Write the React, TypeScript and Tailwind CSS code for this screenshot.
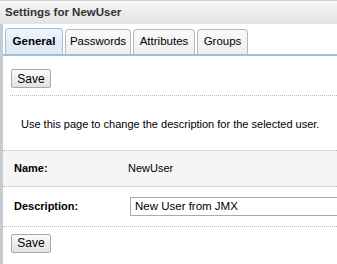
const tabs = [
  { label: "General", w: "w-[58px]" },
  { label: "Passwords", w: "w-[66px]" },
  { label: "Attributes", w: "w-[62px]" },
  { label: "Groups", w: "w-[51px]" },
];

const SaveButton = () => (
  <button className="h-[19px] w-[40px] border border-[#a9a9a9] rounded-[2px] bg-gradient-to-b from-[#fbfbfb] to-[#e2e2e2] text-[12px] leading-none text-black">
    Save
  </button>
);

export default function App() {
  return (
    <div className="w-[337px] h-[264px] overflow-hidden bg-white text-[11px] text-black font-['Liberation_Sans',sans-serif]">
      <div className="h-[24px] border-t border-[#d0d0d0] bg-gradient-to-b from-[#f6f6f6] to-[#e2e2e2] flex items-center pl-[5px]">
        <span className="font-bold text-[11.5px] text-[#333]">Settings for NewUser</span>
      </div>
      <div className="border-l-[3px] border-[#c5cbd1] h-[240px]">
        <div className="flex items-end gap-[2px] pl-[2px] pt-[4px] border-b-2 border-[#9ec0dd]">
          {tabs.map((t, i) => (
            <div
              key={t.label}
              className={
                i === 0
                  ? `h-[26px] ${t.w} justify-center flex items-center font-bold text-[11.5px] border border-b-0 border-[#9ec0dd] rounded-t-[4px] bg-gradient-to-b from-[#eef4fa] to-[#dbe8f4]`
                  : `h-[25px] ${t.w} justify-center flex items-center text-[11.5px] border border-b-0 border-[#b9b9b9] rounded-t-[4px] bg-gradient-to-b from-[#fafafa] to-[#eeeeee]`
              }
            >
              {t.label}
            </div>
          ))}
        </div>
        <div className="pl-[8px] pt-[13px]">
          <SaveButton />
        </div>
        <div className="ml-[7px] mt-[7px] border-b border-dotted border-[#bbb]" />
        <p className="pl-[18px] pt-[20px] pb-[17px] text-[11px]">
          Use this page to change the description for the selected user.
        </p>
        <div className="border-t border-b border-dotted border-[#bbb] bg-[#f5f5f5] h-[37px] flex items-center">
          <span className="w-[125px] pl-[11px] font-bold text-[11px]">Name:</span>
          <span className="text-[11px]">NewUser</span>
        </div>
        <div className="h-[40px] flex items-center border-b border-dotted border-[#bbb]">
          <span className="w-[127px] pl-[11px] shrink-0 font-bold text-[11px]">Description:</span>
          <input
            readOnly
            value="New User from JMX"
            className="w-[240px] shrink-0 h-[19px] border border-[#aaa] px-[4px] text-[11.5px] outline-none"
          />
        </div>
        <div className="pl-[8px] pt-[7px]">
          <SaveButton />
        </div>
      </div>
    </div>
  );
}
